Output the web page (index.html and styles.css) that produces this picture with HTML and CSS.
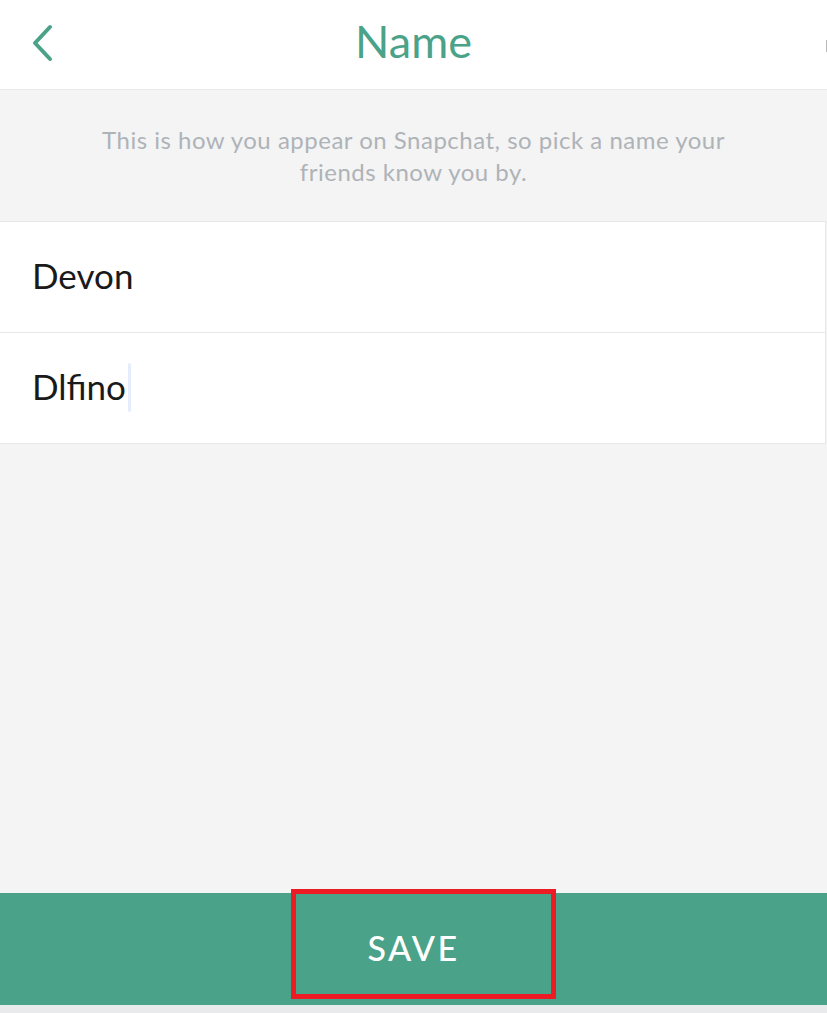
FILE: index.html
```html
<!DOCTYPE html>
<html lang="en">
<head>
<meta charset="utf-8">
<title>Name</title>
<link rel="stylesheet" href="styles.css">
</head>
<body>
<div class="screen">
  <div class="status-left"></div>
  <div class="status-right"></div>
  <header class="header">
    <button class="back" aria-label="Back">
      <svg width="24" height="40" viewBox="0 0 24 40">
        <polyline points="19,3 4,19 19,35" fill="none" stroke="#4aa289" stroke-width="4" stroke-linecap="round" stroke-linejoin="round"/>
      </svg>
    </button>
    <h1 class="title">Name</h1>
    <div class="edge-mark"></div>
  </header>
  <section class="intro">
    <p>This is how you appear on Snapchat, so pick a name your<br>friends know you by.</p>
  </section>
  <div class="fields">
    <div class="field"><span class="value">Devon</span></div>
    <div class="field"><span class="value">Dlfino</span><span class="caret"></span></div>
  </div>
  <div class="spacer"></div>
  <div class="savebar">
    <span class="save">SAVE</span>
    <div class="highlight"></div>
  </div>
  <div class="footer"></div>
</div>
</body>
</html>
```
FILE: styles.css
```css
html, body {
  margin: 0;
  padding: 0;
}
body {
  width: 827px;
  height: 1013px;
  overflow: hidden;
  background: #f4f4f4;
  font-family: "Lato", "Noto Sans", sans-serif;
}
.screen {
  position: relative;
  width: 827px;
  height: 1013px;
  display: flex;
  flex-direction: column;
}
.status-left {
  position: absolute;
  left: 14px;
  top: 0;
  width: 8px;
  height: 2px;
  background: #000;
}
.status-right {
  position: absolute;
  right: 0;
  top: 0;
  width: 24px;
  height: 2px;
  background: #000;
}
.header {
  position: relative;
  height: 89px;
  background: #fff;
  border-bottom: 1px solid #e9e9e9;
  display: flex;
  align-items: center;
  justify-content: center;
  flex-shrink: 0;
}
.back {
  position: absolute;
  left: 31px;
  top: 24px;
  width: 24px;
  height: 40px;
  padding: 0;
  margin: 0;
  border: 0;
  background: none;
  display: block;
}
.back svg {
  display: block;
}
.edge-mark {
  position: absolute;
  right: 0;
  top: 40px;
  width: 1px;
  height: 12px;
  background: #b8b8b8;
}
.title {
  margin: 0;
  font-weight: 400;
  font-size: 45px;
  color: #4aa289;
  line-height: 1;
  padding-bottom: 6px;
}
.intro {
  height: 131px;
  box-sizing: border-box;
  padding-top: 34px;
  flex-shrink: 0;
}
.intro p {
  margin: 0;
  text-align: center;
  font-size: 24px;
  letter-spacing: 0.5px;
  line-height: 32px;
  color: #aeb3b8;
}
.fields {
  flex-shrink: 0;
}
.field {
  width: 826px;
  height: 111px;
  box-sizing: border-box;
  background: #fff;
  border-top: 1px solid #e8e8e8;
  border-right: 1px solid #e8e8e8;
  display: flex;
  align-items: center;
  padding-left: 32px;
  padding-bottom: 5px;
}
.field:last-child {
  border-bottom: 1px solid #e8e8e8;
  height: 112px;
}
.value {
  font-size: 35px;
  color: #1a1a1a;
}
.caret {
  display: inline-block;
  width: 3px;
  height: 49px;
  margin-left: 2px;
  margin-top: 4px;
  border-radius: 2px;
  background: #e6ecfb;
}
.spacer {
  flex: 1;
}
.savebar {
  position: relative;
  height: 112px;
  background: #4aa289;
  display: flex;
  align-items: center;
  justify-content: center;
  flex-shrink: 0;
}
.save {
  color: #fff;
  font-size: 34px;
  letter-spacing: 2.5px;
  font-weight: 500;
  padding-bottom: 3px;
}
.highlight {
  position: absolute;
  left: 291px;
  top: -4px;
  width: 265px;
  height: 110px;
  box-sizing: border-box;
  border: 5px solid #ed1c24;
}
.footer {
  height: 8px;
  background: #e9eaec;
  flex-shrink: 0;
}
```
